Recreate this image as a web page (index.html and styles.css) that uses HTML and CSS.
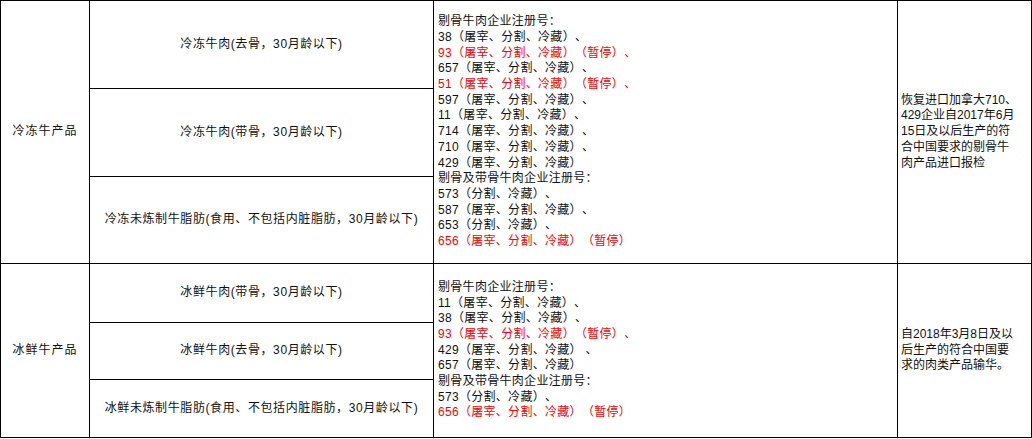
FILE: index.html
```html
<!DOCTYPE html>
<html lang="zh-CN">
<head>
<meta charset="utf-8">
<link rel="stylesheet" href="styles.css">
</head>
<body>
<table class="grid">
  <colgroup>
    <col class="c1"><col class="c2"><col class="c3"><col class="c4">
  </colgroup>
  <tr class="r1">
    <td rowspan="3" class="cat">冷冻牛产品</td>
    <td class="prod">冷冻牛肉(去骨，30月龄以下)</td>
    <td rowspan="3" class="list">
      剔骨牛肉企业注册号：<br>
      38（屠宰、分割、冷藏）、<br>
      <span class="red">93（屠宰、分割、冷藏）（暂停）、</span><br>
      657（屠宰、分割、冷藏）、<br>
      <span class="red">51（屠宰、分割、冷藏）（暂停）、</span><br>
      597（屠宰、分割、冷藏）、<br>
      11（屠宰、分割、冷藏）、<br>
      714（屠宰、分割、冷藏）、<br>
      710（屠宰、分割、冷藏）、<br>
      429（屠宰、分割、冷藏）<br>
      剔骨及带骨牛肉企业注册号：<br>
      573（分割、冷藏）、<br>
      587（屠宰、分割、冷藏）、<br>
      653（分割、冷藏）、<br>
      <span class="red">656（屠宰、分割、冷藏）（暂停）</span>
    </td>
    <td rowspan="3" class="note">恢复进口加拿大710、<br>429企业自2017年6月<br>15日及以后生产的符<br>合中国要求的剔骨牛<br>肉产品进口报检</td>
  </tr>
  <tr class="r2">
    <td class="prod">冷冻牛肉(带骨，30月龄以下)</td>
  </tr>
  <tr class="r3">
    <td class="prod">冷冻未炼制牛脂肪(食用、不包括内脏脂肪，30月龄以下)</td>
  </tr>
  <tr class="r4">
    <td rowspan="3" class="cat">冰鲜牛产品</td>
    <td class="prod">冰鲜牛肉(带骨，30月龄以下)</td>
    <td rowspan="3" class="list">
      剔骨牛肉企业注册号：<br>
      11（屠宰、分割、冷藏）、<br>
      38（屠宰、分割、冷藏）、<br>
      <span class="red">93（屠宰、分割、冷藏）（暂停）、</span><br>
      429（屠宰、分割、冷藏） 、<br>
      657（屠宰、分割、冷藏）<br>
      剔骨及带骨牛肉企业注册号：<br>
      573（分割、冷藏）、<br>
      <span class="red">656（屠宰、分割、冷藏）（暂停）</span>
    </td>
    <td rowspan="3" class="note">自2018年3月8日及以<br>后生产的符合中国要<br>求的肉类产品输华。</td>
  </tr>
  <tr class="r5">
    <td class="prod">冰鲜牛肉(去骨，30月龄以下)</td>
  </tr>
  <tr class="r6">
    <td class="prod">冰鲜未炼制牛脂肪(食用、不包括内脏脂肪，30月龄以下)</td>
  </tr>
</table>
</body>
</html>
```

FILE: styles.css
```css
html, body {
  margin: 0;
  padding: 0;
  background: #fff;
}
body {
  font-family: "Liberation Sans", "Noto Sans CJK SC", sans-serif;
  font-size: 12px;
  color: #111;
  text-spacing-trim: space-all;
}
.grid {
  border-collapse: collapse;
  table-layout: fixed;
  width: 1031px;
}
.grid td {
  border: 1px solid #000;
  padding: 0;
  vertical-align: middle;
  line-height: 15.7px;
  white-space: nowrap;
}
.c1 { width: 89px; }
.c2 { width: 344px; }
.c3 { width: 464px; }
.c4 { width: 134px; }
.r1 { height: 88px; }
.r2 { height: 88px; }
.r3 { height: 87px; }
.r4 { height: 59px; }
.r5 { height: 57px; }
.r6 { height: 58px; }
.cat {
  text-align: center;
  letter-spacing: 1px;
}
.prod {
  text-align: center;
  letter-spacing: 0.6px;
}
.list {
  padding-left: 4px !important;
  letter-spacing: 0.3px;
}
.note {
  padding-left: 3px !important;
}
.red {
  color: #f00;
}
```
